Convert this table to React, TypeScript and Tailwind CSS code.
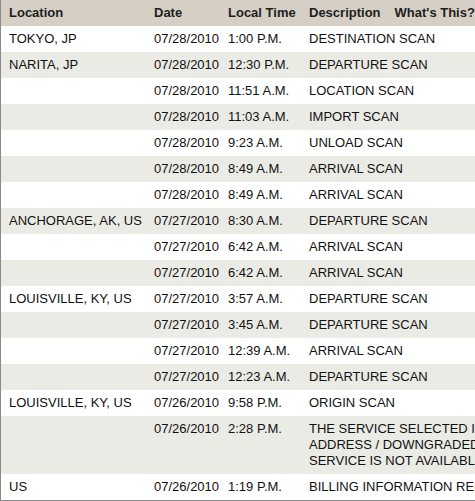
type Scan = {
  location?: string;
  date: string;
  time: string;
  description: string[];
};

const scans: Scan[] = [
  { location: "TOKYO, JP", date: "07/28/2010", time: "1:00 P.M.", description: ["DESTINATION SCAN"] },
  { location: "NARITA, JP", date: "07/28/2010", time: "12:30 P.M.", description: ["DEPARTURE SCAN"] },
  { date: "07/28/2010", time: "11:51 A.M.", description: ["LOCATION SCAN"] },
  { date: "07/28/2010", time: "11:03 A.M.", description: ["IMPORT SCAN"] },
  { date: "07/28/2010", time: "9:23 A.M.", description: ["UNLOAD SCAN"] },
  { date: "07/28/2010", time: "8:49 A.M.", description: ["ARRIVAL SCAN"] },
  { date: "07/28/2010", time: "8:49 A.M.", description: ["ARRIVAL SCAN"] },
  { location: "ANCHORAGE, AK, US", date: "07/27/2010", time: "8:30 A.M.", description: ["DEPARTURE SCAN"] },
  { date: "07/27/2010", time: "6:42 A.M.", description: ["ARRIVAL SCAN"] },
  { date: "07/27/2010", time: "6:42 A.M.", description: ["ARRIVAL SCAN"] },
  { location: "LOUISVILLE, KY, US", date: "07/27/2010", time: "3:57 A.M.", description: ["DEPARTURE SCAN"] },
  { date: "07/27/2010", time: "3:45 A.M.", description: ["DEPARTURE SCAN"] },
  { date: "07/27/2010", time: "12:39 A.M.", description: ["ARRIVAL SCAN"] },
  { date: "07/27/2010", time: "12:23 A.M.", description: ["DEPARTURE SCAN"] },
  { location: "LOUISVILLE, KY, US", date: "07/26/2010", time: "9:58 P.M.", description: ["ORIGIN SCAN"] },
  {
    date: "07/26/2010",
    time: "2:28 P.M.",
    description: [
      "THE SERVICE SELECTED IS NOT AVAILABLE TO THE",
      "ADDRESS / DOWNGRADED TO AN AVAILABLE",
      "SERVICE IS NOT AVAILABLE",
    ],
  },
  { location: "US", date: "07/26/2010", time: "1:19 P.M.", description: ["BILLING INFORMATION RECEIVED"] },
];

const cols = "grid grid-cols-[145px_74px_81px_1fr]";

export default function App() {
  return (
    <div className="h-[501px] w-[475px] overflow-hidden bg-white font-['Liberation_Sans',Arial,sans-serif] text-[13px] text-[#111]">
      <div className="w-[640px] border-b-2 border-l border-[#8a8a8a]">
        {/* 見出し */}
        <div className={`${cols} h-[26px] items-center whitespace-nowrap bg-[#d5cfc5] font-bold text-[#1e1e1e]`}>
          <div className="px-2">Location</div>
          <div className="px-2">Date</div>
          <div className="px-2">Local Time</div>
          <div className="flex gap-[14px] px-2">
            <span>Description</span>
            <span>What's This?</span>
          </div>
        </div>

        {scans.map((s, i) => (
          <div
            key={i}
            className={`${cols} pt-[5px] pb-[5px] leading-4 whitespace-nowrap ${
              i % 2 === 0 ? "bg-white" : "bg-[#ebebe6]"
            }`}
          >
            <div className="px-2">{s.location}</div>
            <div className="px-2">{s.date}</div>
            <div className="px-2">{s.time}</div>
            <div className="px-2">
              {s.description.map((line) => (
                <div key={line}>{line}</div>
              ))}
            </div>
          </div>
        ))}
      </div>
    </div>
  );
}
